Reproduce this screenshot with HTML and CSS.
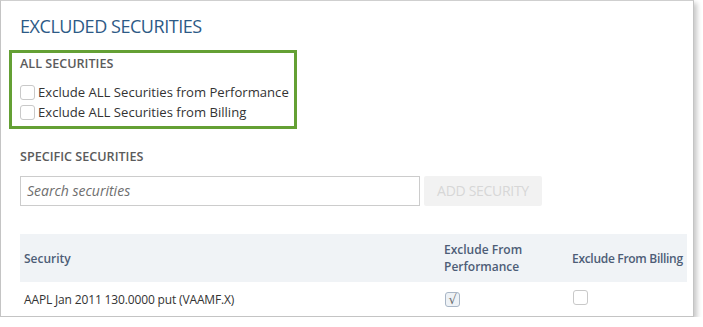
FILE: index.html
```html
<!DOCTYPE html>
<html>
<head>
<meta charset="utf-8">
<link rel="stylesheet" href="styles.css">
</head>
<body>
<div class="panel">
  <h1 class="title">EXCLUDED SECURITIES</h1>
  <div class="highlight">
    <div class="label">ALL SECURITIES</div>
    <label class="check-row"><span class="box"></span><span>Exclude ALL Securities from Performance</span></label>
    <label class="check-row"><span class="box"></span><span>Exclude ALL Securities from Billing</span></label>
  </div>
  <div class="label specific">SPECIFIC SECURITIES</div>
  <div class="search-row">
    <div class="search">Search securities</div>
    <div class="btn">ADD SECURITY</div>
  </div>
  <table class="grid">
    <colgroup>
      <col class="w1">
      <col class="w2">
      <col class="w3">
    </colgroup>
    <thead>
      <tr>
        <th>Security</th>
        <th>Exclude From<br>Performance</th>
        <th class="nowrap">Exclude From Billing</th>
      </tr>
    </thead>
    <tbody>
      <tr>
        <td>AAPL Jan 2011 130.0000 put (VAAMF.X)</td>
        <td><span class="box checked">&#x221A;</span></td>
        <td><span class="box"></span></td>
      </tr>
    </tbody>
  </table>
</div>
</body>
</html>
```
FILE: styles.css
```css
html, body {
  margin: 0;
  padding: 0;
  background: #ffffff;
}
body {
  font-family: "Open Sans", "Noto Sans", sans-serif;
  color: #333333;
}
.panel {
  width: 694px;
  height: 317px;
  box-sizing: border-box;
  border: 1px solid #c4c4c4;
  border-top-color: #cfcfcf;
  background: #ffffff;
  box-shadow: 3px 3px 5px rgba(0, 0, 0, 0.22);
  padding: 13px 5px 0 19px;
  overflow: hidden;
}
.title {
  margin: 0;
  font-size: 18px;
  line-height: 24px;
  font-weight: 400;
  color: #2d5a86;
  letter-spacing: -0.45px;
}
.highlight {
  margin: 12px 0 0 -11px;
  width: 288px;
  box-sizing: border-box;
  border: 3px solid #64a034;
  padding: 3px 0 4px 8px;
}
.label {
  font-size: 12.6px;
  line-height: 16px;
  font-weight: 600;
  color: #5b5b5b;
}
.highlight .label {
  margin-bottom: 10px;
}
.check-row {
  display: flex;
  align-items: center;
  gap: 3px;
  height: 20px;
  font-size: 13.1px;
  white-space: nowrap;
  color: #333333;
}
.box {
  display: inline-flex;
  align-items: center;
  justify-content: center;
  width: 15px;
  height: 15px;
  box-sizing: border-box;
  border: 1px solid #c9c9c9;
  border-radius: 3px;
  background: #ffffff;
  flex: none;
}
.box.checked {
  border-color: #a9b6c6;
  background: #eef2f6;
  color: #6d6d6d;
  font-size: 13px;
  line-height: 1;
  font-family: "DejaVu Sans", sans-serif;
}
.specific {
  margin-top: 20px;
}
.search-row {
  display: flex;
  gap: 4px;
  margin-top: 11px;
}
.search {
  width: 400px;
  height: 30px;
  box-sizing: border-box;
  border: 1px solid #cccccc;
  padding: 0 6px;
  font-size: 14px;
  line-height: 28px;
  font-style: italic;
  color: #6e6e6e;
}
.btn {
  width: 118px;
  height: 30px;
  box-sizing: border-box;
  background: #f2f2f2;
  border-radius: 2px;
  font-size: 14px;
  line-height: 30px;
  text-align: center;
  color: #d7d7d7;
  letter-spacing: -0.3px;
}
.grid {
  margin-top: 28px;
  width: 667px;
  border-collapse: collapse;
  table-layout: fixed;
}
.grid .w1 { width: 420px; }
.grid .w2 { width: 128px; }
.grid .w3 { width: 119px; }
.grid th {
  background: #f0f3f6;
  height: 48px;
  padding: 0 4px;
  text-align: left;
  font-size: 12px;
  line-height: 17px;
  font-weight: 600;
  color: #4d5d76;
  vertical-align: middle;
}
.grid th.nowrap {
  white-space: nowrap;
  padding-right: 0;
  letter-spacing: -0.3px;
}
.grid td {
  height: 34px;
  padding: 0 4px;
  font-size: 12px;
  letter-spacing: -0.15px;
  color: #333333;
  vertical-align: middle;
}
.grid td .box {
  margin-left: 1px;
  margin-top: 1px;
}
```
